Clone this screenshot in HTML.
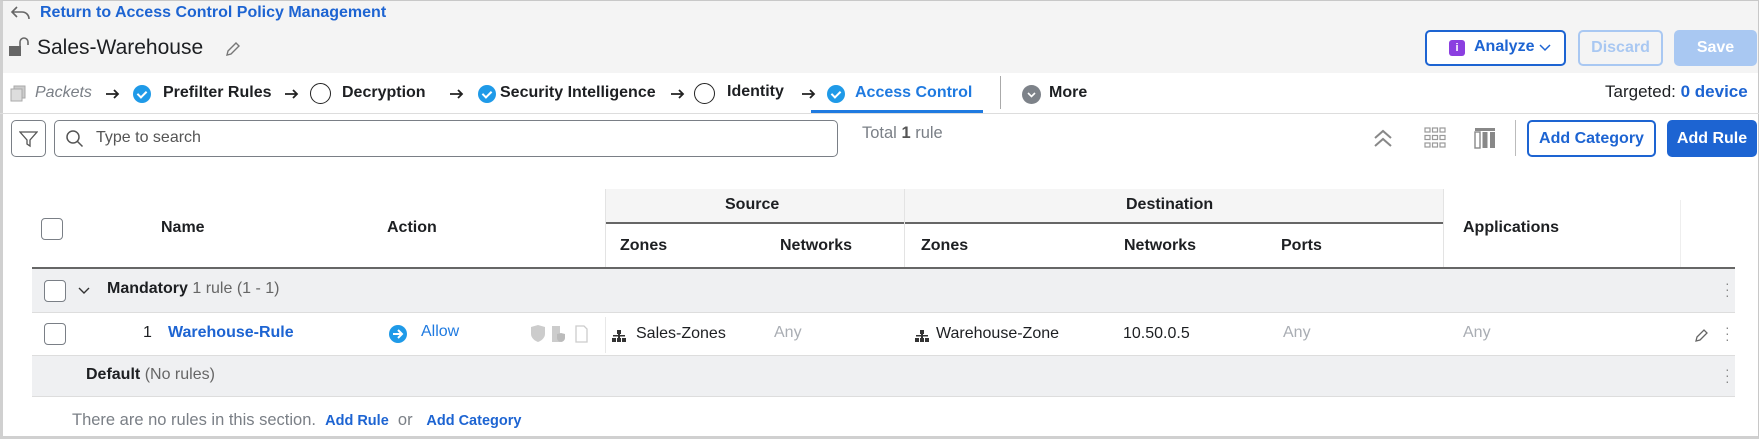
<!DOCTYPE html>
<html><head><meta charset="utf-8"><style>
*{box-sizing:border-box;margin:0;padding:0}
body{width:1759px;height:439px;overflow:hidden;background:#fff;font-family:"Liberation Sans",sans-serif;color:#1d1f22;position:relative}
.a{position:absolute;white-space:nowrap}
.b{font-weight:bold}
.blue{color:#1d64d2}
.cb{position:absolute;width:22px;height:22px;border:1.5px solid #7a7f86;border-radius:4px;background:#fff}
.chk{position:absolute;width:18px;height:18px;border-radius:50%;background:#1f9ae8}
.chk:after{content:"";position:absolute;left:6px;top:4px;width:4px;height:7px;border:solid #fff;border-width:0 2px 2px 0;transform:rotate(45deg)}
.circ{position:absolute;width:21px;height:21px;border-radius:50%;border:1.5px solid #222}
.arr{position:absolute}
.h{font-size:16px;font-weight:bold;position:absolute;white-space:nowrap}
.c{font-size:16px;position:absolute;white-space:nowrap}
.gray{color:#a9adb3}
</style></head><body>
<div class="a" style="left:0;top:0;width:1759px;height:73px;background:#f4f4f4"></div>
<div class="a" style="left:0;top:0;width:1759px;height:439px;border:1px solid #c8c8c8;border-left:3px solid #d0d0d0;border-bottom:3px solid #d0d0d0"></div>
<svg class="a" style="left:10px;top:5px" width="22" height="16" viewBox="0 0 22 16"><path d="M7 2L2 7l5 5M2 7h10c4 0 7 3 7 7" fill="none" stroke="#666" stroke-width="1.6"/></svg>
<div class="a b blue" style="left:40px;top:4px;font-size:16px">Return to Access Control Policy Management</div>
<svg class="a" style="left:8px;top:37px" width="22" height="22" viewBox="0 0 22 22"><rect x="1" y="9" width="12" height="10" fill="#666"/><path d="M12 9V5a4 4 0 0 1 8 0v3" fill="none" stroke="#666" stroke-width="1.6"/></svg>
<div class="a" style="left:37px;top:36px;font-size:21px">Sales-Warehouse</div>
<svg class="a" style="left:224px;top:40px" width="18" height="18" viewBox="0 0 18 18"><path d="M3 15l1-4 8-8 3 3-8 8z" fill="none" stroke="#777" stroke-width="1.4"/></svg>
<div class="a" style="left:1425px;top:30px;width:141px;height:36px;border:2px solid #1d64d2;border-radius:5px;background:#fff"></div>
<div class="a" style="left:1449px;top:40px;width:16px;height:16px;background:#8b3fe0;border-radius:3px;color:#fff;font-size:11px;font-weight:bold;text-align:center;line-height:16px">i</div>
<div class="a b blue" style="left:1474px;top:38px;font-size:16px">Analyze</div>
<svg class="a" style="left:1539px;top:44px" width="12" height="8"><path d="M1 1l5 5 5-5" fill="none" stroke="#1d64d2" stroke-width="1.5"/></svg>
<div class="a b" style="left:1578px;top:30px;width:85px;height:36px;border:2px solid #a9c8f2;border-radius:5px;color:#a9c8f2;font-size:16px;text-align:center;line-height:32px">Discard</div>
<div class="a b" style="left:1674px;top:30px;width:83px;height:36px;background:#a9c8f2;border-radius:5px;color:#fff;font-size:16px;text-align:center;line-height:36px">Save</div>
<!-- nav -->
<svg class="a" style="left:9px;top:84px" width="18" height="18"><rect x="5" y="2" width="11" height="12" fill="#ccc" stroke="#aaa"/><rect x="2" y="5" width="11" height="12" fill="#ddd" stroke="#aaa"/></svg>
<div class="a" style="left:35px;top:84px;font-size:16px;font-style:italic;color:#7a7f86">Packets</div>
<svg class="arr" style="left:106px;top:89px" width="14" height="10"><path d="M0 5h12M8 1l4 4-4 4" fill="none" stroke="#222" stroke-width="1.8"/></svg>
<div class="chk" style="left:133px;top:85px"></div>
<div class="a b" style="left:163px;top:84px;font-size:16px">Prefilter Rules</div>
<svg class="arr" style="left:285px;top:89px" width="14" height="10"><path d="M0 5h12M8 1l4 4-4 4" fill="none" stroke="#222" stroke-width="1.8"/></svg>
<div class="circ" style="left:310px;top:83px"></div>
<div class="a b" style="left:342px;top:84px;font-size:16px">Decryption</div>
<svg class="arr" style="left:450px;top:89px" width="14" height="10"><path d="M0 5h12M8 1l4 4-4 4" fill="none" stroke="#222" stroke-width="1.8"/></svg>
<div class="chk" style="left:478px;top:85px"></div>
<div class="a b" style="left:500px;top:84px;font-size:16px">Security Intelligence</div>
<svg class="arr" style="left:671px;top:89px" width="14" height="10"><path d="M0 5h12M8 1l4 4-4 4" fill="none" stroke="#222" stroke-width="1.8"/></svg>
<div class="circ" style="left:694px;top:83px"></div>
<div class="a b" style="left:727px;top:83px;font-size:16px">Identity</div>
<svg class="arr" style="left:802px;top:89px" width="14" height="10"><path d="M0 5h12M8 1l4 4-4 4" fill="none" stroke="#222" stroke-width="1.8"/></svg>
<div class="chk" style="left:827px;top:85px"></div>
<div class="a b blue" style="left:855px;top:84px;font-size:16px;color:#1f7ae0">Access Control</div>
<div class="a" style="left:811px;top:110px;width:172px;height:3px;background:#1f7ae0"></div>
<div class="a" style="left:1000px;top:76px;width:1px;height:33px;background:#aaa"></div>
<div class="a" style="left:1022px;top:85px;width:19px;height:19px;border-radius:50%;background:#7d8289"></div>
<svg class="a" style="left:1026px;top:91px" width="11" height="8"><path d="M2 2l3.5 3.5L9 2" fill="none" stroke="#fff" stroke-width="1.6"/></svg>
<div class="a b" style="left:1049px;top:84px;font-size:16px">More</div>
<div class="a" style="left:1605px;top:82px;font-size:17px">Targeted: <b class="blue">0 device</b></div>
<div class="a" style="left:0;top:113px;width:1759px;height:1px;background:#ddd"></div>
<!-- toolbar -->
<div class="a" style="left:11px;top:120px;width:35px;height:37px;border:1.5px solid #7a7f86;border-radius:5px;background:#fff"></div>
<svg class="a" style="left:19px;top:130px" width="19" height="18"><path d="M1 2h17l-7 8v6l-3-2v-4z" fill="none" stroke="#555" stroke-width="1.3"/></svg>
<div class="a" style="left:54px;top:120px;width:784px;height:37px;border:1.5px solid #7a7f86;border-radius:5px;background:#fff"></div>
<svg class="a" style="left:65px;top:129px" width="20" height="20"><circle cx="8" cy="8" r="6" fill="none" stroke="#555" stroke-width="1.5"/><path d="M12.5 12.5l5 5" stroke="#555" stroke-width="1.5"/></svg>
<div class="a" style="left:96px;top:129px;font-size:16px;color:#555">Type to search</div>
<div class="a" style="left:862px;top:124px;font-size:16.5px;color:#7a7f86">Total <b style="color:#555">1</b> rule</div>
<svg class="a" style="left:1372px;top:127px" width="22" height="22"><path d="M3 11l8-7 8 7M3 19l8-7 8 7" fill="none" stroke="#888" stroke-width="2"/></svg>
<svg class="a" style="left:1424px;top:127px" width="22" height="22"><g fill="none" stroke="#999" stroke-width="1.2"><rect x="1" y="1" width="5" height="4"/><rect x="8.5" y="1" width="5" height="4"/><rect x="16" y="1" width="5" height="4"/><rect x="1" y="8.5" width="5" height="4"/><rect x="8.5" y="8.5" width="5" height="4"/><rect x="16" y="8.5" width="5" height="4"/><rect x="1" y="16" width="5" height="4"/><rect x="8.5" y="16" width="5" height="4"/><rect x="16" y="16" width="5" height="4"/></g></svg>
<svg class="a" style="left:1474px;top:127px" width="22" height="22"><rect x="1" y="1" width="20" height="3" fill="#888"/><rect x="1" y="5" width="5" height="16" fill="none" stroke="#888" stroke-width="1.4"/><rect x="8.5" y="5" width="5" height="16" fill="#888"/><rect x="16" y="5" width="5" height="16" fill="#888"/></svg>
<div class="a" style="left:1515px;top:120px;width:1px;height:36px;background:#bbb"></div>
<div class="a b blue" style="left:1527px;top:120px;width:129px;height:37px;border:2px solid #1d64d2;border-radius:5px;font-size:16px;text-align:center;line-height:33px">Add Category</div>
<div class="a b" style="left:1667px;top:120px;width:90px;height:37px;background:#1d64d2;border-radius:5px;color:#fff;font-size:16px;text-align:center;line-height:37px">Add Rule</div>
<!-- table header -->
<div class="a" style="left:605px;top:189px;width:838px;height:34px;background:#f5f5f5"></div>
<div class="a" style="left:605px;top:222px;width:838px;height:2px;background:#666"></div>
<div class="a" style="left:904px;top:189px;width:1px;height:79px;background:#e3e3e3"></div>
<div class="a" style="left:605px;top:189px;width:1px;height:79px;background:#e3e3e3"></div>
<div class="a" style="left:1443px;top:189px;width:1px;height:79px;background:#e3e3e3"></div>
<div class="a" style="left:1680px;top:200px;width:1px;height:68px;background:#eee"></div>
<div class="cb" style="left:41px;top:218px"></div>
<div class="h" style="left:161px;top:219px">Name</div>
<div class="h" style="left:387px;top:219px">Action</div>
<div class="h" style="left:725px;top:196px">Source</div>
<div class="h" style="left:1126px;top:196px">Destination</div>
<div class="h" style="left:620px;top:237px">Zones</div>
<div class="h" style="left:780px;top:237px">Networks</div>
<div class="h" style="left:921px;top:237px">Zones</div>
<div class="h" style="left:1124px;top:237px">Networks</div>
<div class="h" style="left:1281px;top:237px">Ports</div>
<div class="h" style="left:1463px;top:219px">Applications</div>
<div class="a" style="left:32px;top:267px;width:1703px;height:2px;background:#666"></div>
<!-- rows -->
<div class="a" style="left:32px;top:269px;width:1703px;height:44px;background:#eff0f2;border-bottom:1px solid #ddd"></div>
<div class="cb" style="left:44px;top:280px"></div>
<svg class="a" style="left:78px;top:287px" width="12" height="8"><path d="M1 1l5 5 5-5" fill="none" stroke="#333" stroke-width="1.4"/></svg>
<div class="a" style="left:107px;top:280px;font-size:16px"><b>Mandatory</b> <span style="color:#666">1 rule (1 - 1)</span></div>
<div class="a" style="left:1725px;top:280px;color:#888;font-size:14px;line-height:6px">·<br>·<br>·</div>
<div class="cb" style="left:44px;top:323px"></div>
<div class="c" style="left:143px;top:324px">1</div>
<div class="c b blue" style="left:168px;top:324px">Warehouse-Rule</div>
<div class="a" style="left:389px;top:325px;width:18px;height:18px;border-radius:50%;background:#1f9ae8"></div>
<svg class="a" style="left:392px;top:328px" width="12" height="12"><path d="M1 6h9M6 2l4 4-4 4" fill="none" stroke="#fff" stroke-width="2"/></svg>
<div class="c" style="left:421px;top:323px;color:#1f7ae0">Allow</div>
<svg class="a" style="left:530px;top:325px" width="62" height="18"><path d="M1 2l7-2 7 2v7c0 4-4 7-7 8-3-1-7-4-7-8z" fill="#ccc"/><rect x="22" y="1" width="8" height="16" fill="#ccc"/><path d="M27 9l4-1 4 1v4c0 2-2 4-4 4-2 0-4-2-4-4z" fill="#bbb"/><path d="M46 1h8l3 3v13h-11z" fill="none" stroke="#ccc" stroke-width="1.3"/></svg>
<div class="a" style="left:605px;top:317px;width:1px;height:36px;background:#e8e8e8"></div>
<svg class="a" style="left:612px;top:330px" width="14" height="12"><g fill="#333"><rect x="5" y="0" width="4" height="4"/><rect x="0" y="8" width="4" height="4"/><rect x="5" y="8" width="4" height="4"/><rect x="10" y="8" width="4" height="4"/><rect x="6" y="4" width="2" height="4"/><rect x="1" y="5" width="12" height="1.5"/></g></svg>
<div class="c" style="left:636px;top:325px">Sales-Zones</div>
<div class="c gray" style="left:774px;top:324px">Any</div>
<svg class="a" style="left:915px;top:330px" width="14" height="12"><g fill="#333"><rect x="5" y="0" width="4" height="4"/><rect x="0" y="8" width="4" height="4"/><rect x="5" y="8" width="4" height="4"/><rect x="10" y="8" width="4" height="4"/><rect x="6" y="4" width="2" height="4"/><rect x="1" y="5" width="12" height="1.5"/></g></svg>
<div class="c" style="left:936px;top:325px">Warehouse-Zone</div>
<div class="c" style="left:1123px;top:325px">10.50.0.5</div>
<div class="c gray" style="left:1283px;top:324px">Any</div>
<div class="c gray" style="left:1463px;top:324px">Any</div>
<svg class="a" style="left:1694px;top:327px" width="16" height="16"><path d="M2 14l1-4 7-7 3 3-7 7z" fill="none" stroke="#666" stroke-width="1.3"/></svg>
<div class="a" style="left:1725px;top:324px;color:#888;font-size:14px;line-height:6px">·<br>·<br>·</div>
<div class="a" style="left:32px;top:355px;width:1703px;height:42px;background:#eff0f2;border-top:1px solid #ddd;border-bottom:1px solid #ddd"></div>
<div class="a" style="left:86px;top:366px;font-size:16px"><b>Default</b> <span style="color:#666">(No rules)</span></div>
<div class="a" style="left:1725px;top:366px;color:#888;font-size:14px;line-height:6px">·<br>·<br>·</div>
<div class="a" style="left:72px;top:411px;font-size:16.5px;color:#7a7f86">There are no rules in this section. &nbsp;<b class="blue" style="font-size:14.5px">Add Rule</b> &nbsp;or &nbsp;&nbsp;<b class="blue" style="font-size:14.5px">Add Category</b></div>
</body></html>
